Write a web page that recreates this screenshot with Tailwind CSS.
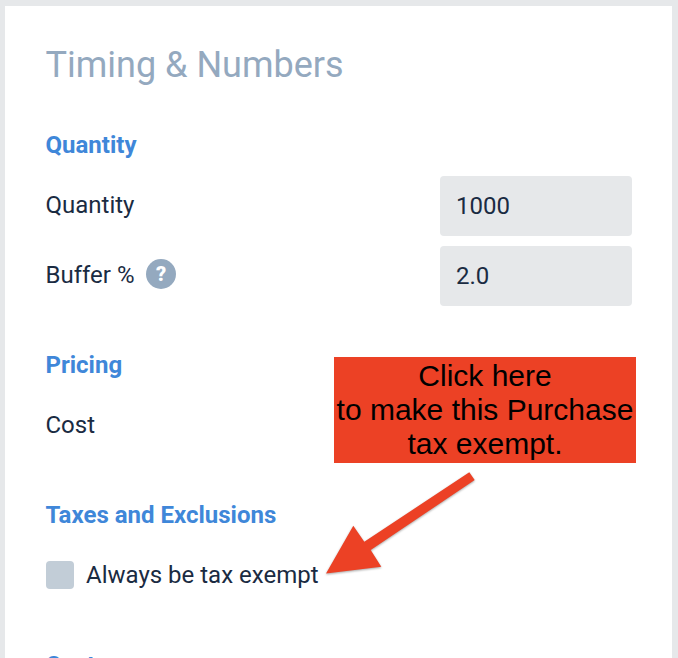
<!DOCTYPE html>
<html lang="en">
<head>
    <meta charset="UTF-8">
    <title>Timing &amp; Numbers</title>
    <script src="https://cdn.jsdelivr.net/npm/@tailwindcss/browser@4"></script>
</head>
<body class="h-[658px] overflow-hidden bg-[#e6e8ea] font-['Roboto',sans-serif]">
    <div class="relative ml-[5px] mr-[6px] mt-[6px] h-[652px] overflow-hidden bg-white pl-[41px] pr-[40px] text-[#1a2b42]">
        <!-- Heading -->
        <h1 class="-ml-[0.5px] pt-[36px] text-[36px] leading-[46px] text-[#94a9bf]">Timing &amp; Numbers</h1>

        <!-- Quantity -->
        <h2 class="-ml-[0.5px] mt-[43px] text-[24px] leading-[28px] font-bold text-[#3f87d9]">Quantity</h2>
        <div class="mt-[17px] flex h-[60px] items-center justify-between">
            <span class="-ml-[0.5px] pb-[2px] text-[24px]">Quantity</span>
            <div class="flex h-[60px] w-[192px] items-center rounded bg-[#e6e8ea] pl-[16px] text-[24px]">1000</div>
        </div>
        <div class="mt-[10px] flex h-[60px] items-center justify-between">
            <div class="-ml-[0.5px] flex items-center gap-[12px] pb-[2px]">
                <span class="text-[24px]">Buffer %</span>
                <svg class="mb-[2px] h-[30px] w-[30px]" viewBox="0 0 30 30">
                    <circle cx="15" cy="15" r="15" fill="#94a9bf"/>
                    <text x="15" y="22" text-anchor="middle" font-family="Roboto" font-size="20" font-weight="900" fill="#fff">?</text>
                </svg>
            </div>
            <div class="flex h-[60px] w-[192px] items-center rounded bg-[#e6e8ea] pl-[16px] text-[24px]">2.0</div>
        </div>

        <!-- Pricing -->
        <h2 class="-ml-[0.5px] mt-[45px] text-[24px] leading-[28px] font-bold text-[#3f87d9]">Pricing</h2>
        <div class="mt-[16px] flex h-[60px] items-center">
            <span class="-ml-[0.5px] text-[24px]">Cost</span>
        </div>

        <!-- Taxes -->
        <h2 class="-ml-[0.5px] mt-[46px] text-[24px] leading-[28px] font-bold text-[#3f87d9]">Taxes and Exclusions</h2>
        <div class="mt-[32px] flex items-center gap-[12px]">
            <div class="h-[28px] w-[28px] rounded bg-[#c2cdd7]"></div>
            <span class="text-[24px] leading-[28px]">Always be tax exempt</span>
        </div>

        <h2 class="-ml-[0.5px] mt-[62px] text-[24px] leading-[28px] font-bold text-[#3f87d9]">Costs</h2>

        <!-- Annotation callout -->
        <div class="absolute left-[329px] top-[351px] h-[106px] w-[302px] bg-[#ec4125] pt-[2px] text-center font-['Liberation_Sans',sans-serif] text-[30px] leading-[34px] text-black">
            Click here<br>to make this Purchase<br>tax exempt.
        </div>
        <svg class="absolute left-[-5px] top-[-6px] overflow-visible drop-shadow-[0.5px_1.5px_1px_rgba(0,0,0,0.35)]" width="678" height="658" viewBox="0 0 678 658">
            <polygon points="326,573.5 353.3,525.7 364.3,541.7 469.3,472.3 474.7,480 370.7,550 381.3,566.7" fill="#ec4125"/>
        </svg>
    </div>
</body>
</html>
